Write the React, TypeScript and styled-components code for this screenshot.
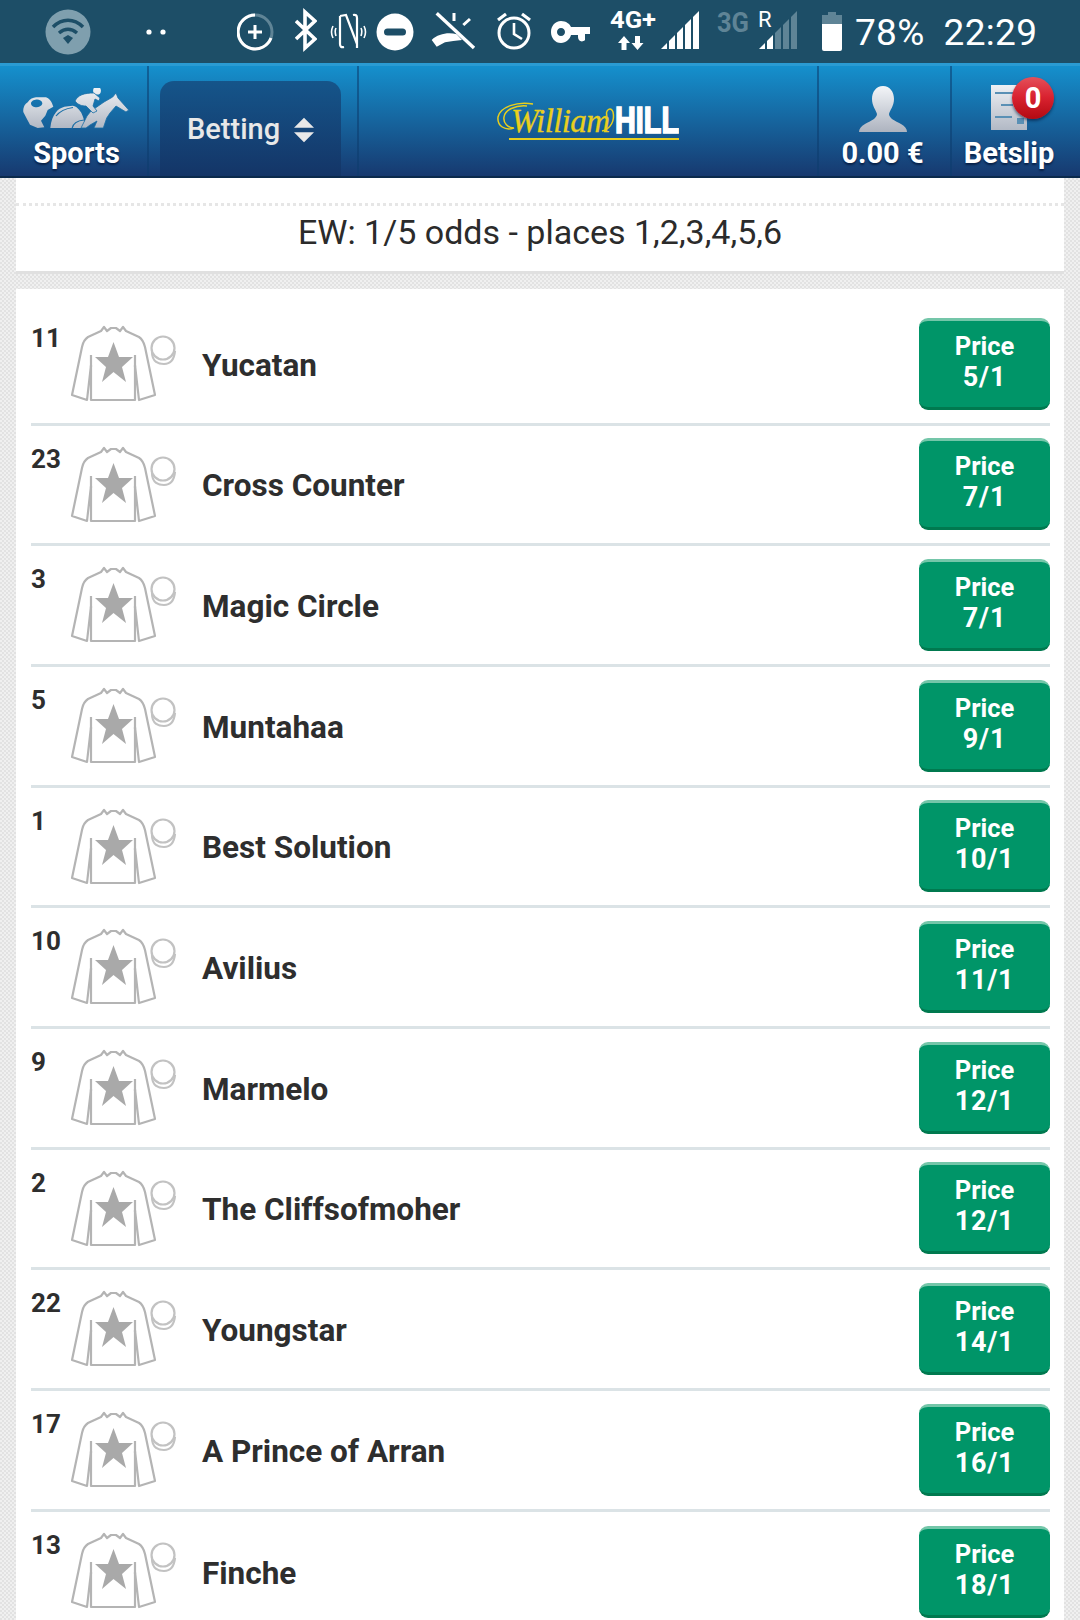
import * as React from 'react';
import styled, { createGlobalStyle } from 'styled-components';

const GlobalStyle = createGlobalStyle`
  html, body {
    margin: 0;
    padding: 0;
    background: #ececec;
  }
  * { box-sizing: border-box; }
`;

interface IRunner {
  num: string;
  name: string;
  price: string;
}

const runners: IRunner[] = [
  { num: '11', name: 'Yucatan', price: '5/1' },
  { num: '23', name: 'Cross Counter', price: '7/1' },
  { num: '3', name: 'Magic Circle', price: '7/1' },
  { num: '5', name: 'Muntahaa', price: '9/1' },
  { num: '1', name: 'Best Solution', price: '10/1' },
  { num: '10', name: 'Avilius', price: '11/1' },
  { num: '9', name: 'Marmelo', price: '12/1' },
  { num: '2', name: 'The Cliffsofmoher', price: '12/1' },
  { num: '22', name: 'Youngstar', price: '14/1' },
  { num: '17', name: 'A Prince of Arran', price: '16/1' },
  { num: '13', name: 'Finche', price: '18/1' }
];

const Page = styled.div`
  width: 1080px;
  height: 1620px;
  overflow: hidden;
  font-family: Roboto, "Liberation Sans", sans-serif;
  color: #2b2b2b;
  background-color: #eeeeee;
  background-image: conic-gradient(#e2e2e2 25%, #f0f0f0 0 50%, #e2e2e2 0 75%, #f0f0f0 0);
  background-size: 4px 4px;
`;

const StatusBar = styled.div`
  height: 63px;
  background: #1d4e67;
  display: flex;
  align-items: flex-start;
  color: #ffffff;
`;

const StatusIcon = styled.svg<{ $left: number }>`
  display: block;
  flex: none;
  margin-left: ${(p) => p.$left}px;
`;

const StatusText = styled.span<{ $left: number }>`
  margin-left: ${(p) => p.$left}px;
  font-size: 37px;
  line-height: 66px;
  letter-spacing: 0.3px;
  white-space: nowrap;
`;

const Header = styled.header`
  height: 115px;
  display: flex;
  align-items: stretch;
  border-top: 3px solid #2a9bd3;
  border-bottom: 2px solid #0b2a4c;
  background: linear-gradient(#1590cd, #17396f);
`;

const HeaderCell = styled.div<{ $width: number; $divider?: boolean; $shift?: string }>`
  position: relative;
  width: ${(p) => p.$width}px;
  flex: none;
  display: flex;
  flex-direction: column;
  align-items: center;
  justify-content: flex-end;
  padding: ${(p) => p.$shift || '0'};
  padding-bottom: 7px;
  border-right: ${(p) => (p.$divider ? '2px solid rgba(12, 60, 110, 0.55)' : '0')};
`;

const HeaderLabel = styled.span`
  color: #ffffff;
  font-size: 29px;
  font-weight: 700;
  line-height: 32px;
  text-shadow: 0 2px 2px rgba(5, 25, 60, 0.8);
  white-space: nowrap;
`;

const HeaderIcon = styled.svg<{ $gap: number }>`
  display: block;
  flex: none;
  margin-bottom: ${(p) => p.$gap}px;
`;

const TabCell = styled.div`
  width: 210px;
  flex: none;
  padding: 15px 16px 0 11px;
  border-right: 2px solid rgba(12, 60, 110, 0.55);
`;

const BettingTab = styled.div`
  height: 95px;
  border-radius: 14px 14px 0 0;
  background: linear-gradient(#15558a, #143567);
  display: flex;
  align-items: center;
  padding: 0 0 0 27px;
  gap: 14px;
  color: #e8e8e8;
  font-size: 29px;
  font-weight: 500;
`;

const Chevrons = styled.svg`
  display: block;
  margin-top: 3px;
`;

const LogoCell = styled.div`
  flex: 1;
  display: flex;
  justify-content: center;
  padding: 36px 0 0 0;
  border-right: 2px solid rgba(12, 60, 110, 0.55);
`;

const Logo = styled.div`
  position: relative;
  width: 182px;
  height: 40px;
  display: flex;
  align-items: flex-start;
`;

const LogoScript = styled.span`
  width: 118px;
  flex: none;
  padding-left: 14px;
  font-family: "Liberation Serif", serif;
  font-style: italic;
  font-size: 33px;
  line-height: 38px;
  letter-spacing: -0.6px;
  color: #e9cf1d;
  -webkit-text-stroke: 0.3px #e9cf1d;
  white-space: nowrap;
`;

const LogoBold = styled.span`
  display: block;
  font-family: "Liberation Sans", sans-serif;
  font-weight: 700;
  font-size: 36px;
  line-height: 38px;
  color: #ffffff;
  -webkit-text-stroke: 1.6px #ffffff;
  transform: scaleX(0.8);
  transform-origin: left center;
`;

const LogoRule = styled.div`
  position: absolute;
  left: 12px;
  right: 0;
  top: 36px;
  height: 2px;
  background: #e9cf1d;
`;

const LogoSwash = styled.svg`
  position: absolute;
  left: 0;
  top: 0;
`;

const Badge = styled.div`
  position: absolute;
  left: 60px;
  top: 11px;
  width: 42px;
  height: 42px;
  border-radius: 50%;
  display: flex;
  align-items: center;
  justify-content: center;
  color: #ffffff;
  font-size: 29px;
  font-weight: 700;
  background: linear-gradient(#e4505a 0%, #d92230 48%, #b30a12 100%);
  box-shadow: 0 2px 3px rgba(5, 25, 60, 0.6);
`;

const Sheet = styled.main`
  margin: 0 16px;
`;

const Notice = styled.div`
  background: #ffffff;
  border-bottom: 3px solid #e0e0e0;
  margin-bottom: 15px;
`;

const NoticeTop = styled.div`
  height: 28px;
  border-bottom: 3px dotted #e6e6e6;
`;

const NoticeText = styled.div`
  height: 65px;
  display: flex;
  align-items: center;
  justify-content: center;
  padding-bottom: 13px;
  font-size: 34px;
  color: #2b2b2b;
`;

const RunnerList = styled.section`
  background: #ffffff;
  padding: 16px 14px 0 15px;
`;

const Row = styled.div`
  height: 120.67px;
  display: flex;
  align-items: center;
  border-bottom: 3px solid #dbe3e6;

  &:last-child { border-bottom: 0; }
`;

const RunnerNum = styled.span`
  width: 38px;
  align-self: flex-start;
  margin-top: 19px;
  font-size: 26px;
  font-weight: 700;
  line-height: 28px;
  color: #2e2e2e;
`;

const Silk = styled.svg`
  display: block;
  flex: none;
  align-self: flex-start;
  margin-top: 18px;
`;

const RunnerName = styled.span`
  flex: 1;
  margin-left: 23px;
  padding-top: 3px;
  font-size: 31.5px;
  font-weight: 700;
  color: #2e2e2e;
`;

const PriceButton = styled.button`
  width: 131px;
  height: 92px;
  flex: none;
  padding: 0 0 4px;
  border: 0;
  border-top: 3px solid #74c6a9;
  border-bottom: 3px solid #00794f;
  border-radius: 9px;
  background: #009568;
  color: #ffffff;
  font-family: inherit;
  font-size: 25.5px;
  font-weight: 700;
  line-height: 31px;
`;

const PriceValue = styled.span`
  display: block;
  font-size: 27px;
  letter-spacing: 0.8px;
`;

const SilkIcon = () => (
  <Silk width="110" height="80" viewBox="8 8 110 80" fill="none" stroke="#b4b4b4" strokeWidth="2.2">
    <path d="M43 12 L46 16 L50 13 L55 13 L59 16 L62 12 L65 16 L78 22 C81 24 83 28 84 32 L94 80 L78 85 L74 50 L74 85 L30 85 L30 50 L26 85 L11 80 L21 32 C22 27 24 24 27 22 L40 16 Z" strokeLinejoin="round" />
    <path d="M30 40 V52 M74 40 V52" />
    <path d="M52.5 27 L58 42 L72 42 L61 52 L65 67 L52.5 57 L41 67 L45 52 L34 42 L47 42 Z" fill="#a9a9a9" stroke="none" />
    <circle cx="102" cy="33" r="11.5" stroke="#c2c2c2" />
    <path d="M91 37 C91 47 98 49 103 49 C108 49 113 46 114 36" stroke="#c2c2c2" />
  </Silk>
);

const SportsIcon = () => (
  <HeaderIcon $gap={7} width="110" height="42" viewBox="12 8 110 42">
    <defs>
      <linearGradient id="sp" gradientUnits="userSpaceOnUse" x1="0" y1="8" x2="0" y2="50">
        <stop offset="0" stopColor="#f0f2f5" />
        <stop offset="1" stopColor="#aeb5c1" />
      </linearGradient>
    </defs>
    <path fillRule="evenodd" fill="url(#sp)" d="M13.3 32 C13 27 15 24 17.7 22.3 C20 19 23 17.5 26 17.3 L36 17.3 C39 18 41 21 42 23.3 L43.3 26.7 L37.7 30 L35.3 35.7 L31 40.7 L34.3 47.3 L27.7 48 L20 44.7 L16 37.3 Z M21 23.5 C21 26 24 27.5 27 27.3 C30 27 32.5 25 32.3 23 C32 20.5 29 19.3 26.5 19.5 C23.5 19.8 21 21.5 21 23.5 Z" />
    <path fill="url(#sp)" d="M40.3 48 C41 41 43 36 46 32.3 C48 29 51 28 54.3 26.7 L62.7 25.7 C66 26 69 29 71 32.3 C73 36 75 42 75 48 Z" />
    <path d="M46 36 C50 31 56 28.5 63 27.5 M62 48.5 C63 43.5 68 40.5 74 40" fill="none" stroke="#1a6ea6" strokeWidth="1.2" />
    <path fill="url(#sp)" stroke="#1a6ea6" strokeWidth="0.8" d="M102.7 17 L106 13 L108 18 L118.7 30 L116 32 L106 26 L100 33 L96.7 38 L93.3 48 L84 48 L87 41 L80 45 L76 48 L71 48 L77 36 L81 31 L94 22 Z" />
    <circle cx="87" cy="10.7" r="3.9" fill="url(#sp)" />
    <path fill="url(#sp)" stroke="#1a6ea6" strokeWidth="0.8" d="M65 21 C68 15 74 13 84 13 L90 18 L89 21 L85 19 L83 26 L87 31 L83 33 L76 26 C72 26 68 25 65 21 Z" />
  </HeaderIcon>
);

const UserIcon = () => (
  <HeaderIcon $gap={5} width="48" height="46" viewBox="0 0 48 46">
    <defs>
      <linearGradient id="us" x1="0" y1="0" x2="0" y2="1">
        <stop offset="0" stopColor="#f3f5f8" />
        <stop offset="1" stopColor="#adb3bf" />
      </linearGradient>
    </defs>
    <path fill="url(#us)" d="M24 0 C31 0 35 6 35 13 C35 20 31 24 30 28 C30 32 36 35 42 38 C46 40 48 43 48 46 L0 46 C0 43 2 40 6 38 C12 35 18 32 18 28 C17 24 13 20 13 13 C13 6 17 0 24 0 Z" />
  </HeaderIcon>
);

const SlipIcon = () => (
  <HeaderIcon $gap={7} width="36" height="45" viewBox="0 0 36 45">
    <defs>
      <linearGradient id="sl" x1="0" y1="0" x2="0" y2="1">
        <stop offset="0" stopColor="#eef0f4" />
        <stop offset="1" stopColor="#b2b9c5" />
      </linearGradient>
    </defs>
    <rect width="36" height="45" fill="url(#sl)" />
    <path d="M4 8 H22 M10 20 H22 M4 32 H21" stroke="#5a90b5" strokeWidth="2" />
    <rect x="26" y="33" width="7" height="6" fill="#5a90b5" />
  </HeaderIcon>
);

const Signal = ({ left, dim }: { left: number; dim?: boolean }) => (
  <StatusIcon $left={left} width="39" height="63" viewBox="0 0 39 63">
    <g fill={dim ? '#5f8496' : '#ffffff'}>
      <path d="M0 49 L6 43 V49 Z" fill="#ffffff" />
      <path d="M8 49 V41 L14 35 V49 Z" fill={dim ? '#ffffff' : undefined} />
      <path d="M16 49 V33 L22 27 V49 Z" />
      <path d="M24 49 V25 L30 19 V49 Z" />
      <path d="M32 49 V17 L38 11 V49 Z" />
    </g>
  </StatusIcon>
);

const StatusIcons = () => (
  <>
    <StatusIcon $left={45} width="46" height="63" viewBox="0 0 46 63">
      <circle cx="23" cy="32" r="22.5" fill="#7f9fae" />
      <path d="M8 27 C17 18 29 18 38 27 M14 33 C20 28 26 28 32 33" fill="none" stroke="#1d4e67" strokeWidth="3.5" />
      <path d="M18 38 L23 35 L28 38 L23 44 Z" fill="#1d4e67" />
    </StatusIcon>
    <StatusIcon $left={54} width="22" height="63" viewBox="0 0 22 63">
      <circle cx="4" cy="32" r="2.6" fill="#fff" />
      <circle cx="18" cy="32" r="2.6" fill="#fff" />
    </StatusIcon>
    <StatusIcon $left={70} width="38" height="63" viewBox="0 0 38 63">
      <circle cx="18" cy="32" r="17" fill="none" stroke="#5f8496" strokeWidth="3" />
      <path d="M18 15 A17 17 0 1 0 34 38" fill="none" stroke="#fff" strokeWidth="3" />
      <path d="M18 25 V39 M11 32 H25" stroke="#fff" strokeWidth="3" />
    </StatusIcon>
    <StatusIcon $left={20} width="22" height="63" viewBox="0 0 22 63">
      <path d="M1 21 L20 39 L10 48 V12 L20 21 L1 39" fill="none" stroke="#fff" strokeWidth="3.6" />
    </StatusIcon>
    <StatusIcon $left={13} width="37" height="63" viewBox="0 0 37 63">
      <path d="M10 16 V44 Q10 48 14 47 M10 16 L16 15 L27 44 M27 48 V18 Q27 14 23 15" fill="none" stroke="#fff" strokeWidth="2.2" />
      <path d="M3 26 C1 30 1 34 3 38 M6 28 C5 30 5 33 6 36 M31 28 C32 30 32 33 31 36 M34 26 C36 30 36 34 34 38" fill="none" stroke="#fff" strokeWidth="1.6" />
    </StatusIcon>
    <StatusIcon $left={9} width="38" height="63" viewBox="0 0 38 63">
      <circle cx="19" cy="32" r="18.5" fill="#fff" />
      <rect x="8" y="28.5" width="22" height="7" rx="3.5" fill="#1d4e67" />
    </StatusIcon>
    <StatusIcon $left={16} width="48" height="63" viewBox="0 0 48 63">
      <path d="M6.7 13.3 L44 48" stroke="#fff" strokeWidth="3.4" />
      <path d="M1.7 40 C8 34 18 32 26.7 34.3 L32 40 L23.3 41 L15 42.3 L6.7 46.7 Z" fill="#fff" />
      <path d="M24 13 V21 M40 19 L33.3 25" stroke="#fff" strokeWidth="3" />
    </StatusIcon>
    <StatusIcon $left={18} width="38" height="63" viewBox="0 0 38 63">
      <circle cx="18" cy="33" r="15" fill="none" stroke="#fff" strokeWidth="3" />
      <path d="M18 23 V34 L26 39" fill="none" stroke="#fff" strokeWidth="2.6" />
      <path d="M2 20 L10 14 M34 20 L26 14" stroke="#fff" strokeWidth="3.2" />
    </StatusIcon>
    <StatusIcon $left={17} width="40" height="63" viewBox="0 0 40 63">
      <path fillRule="evenodd" d="M10 21 C15 21 19 24 20 27 H39 V34 H34 V40 C31 43 27 41 27 37 V35 H20 C19 39 15 43 10 43 C4 43 0 38 0 32 C0 26 4 21 10 21 Z M10 28 C7.5 28 6 30 6 32 C6 34 7.5 36 10 36 C12.5 36 14 34 14 32 C14 30 12.5 28 10 28 Z" fill="#fff" />
    </StatusIcon>
    <StatusIcon $left={19} width="50" height="63" viewBox="0 0 50 63">
      <text x="0" y="28" fill="#fff" fontFamily="Roboto, sans-serif" fontWeight="700" fontSize="24" textLength="46" lengthAdjust="spacingAndGlyphs">4G+</text>
      <path d="M14 36 L20 43 H16.5 V50 H11.5 V43 H8 Z M25 36 H30 V43 H33.5 L27.5 50 L21.5 43 H25 Z" fill="#fff" />
    </StatusIcon>
    <Signal left={1} />
    <StatusIcon $left={16} width="56" height="63" viewBox="0 0 56 63">
      <text x="1" y="32" fill="#5f8496" fontFamily="Roboto, sans-serif" fontWeight="700" fontSize="28" textLength="32" lengthAdjust="spacingAndGlyphs">3G</text>
      <text x="42" y="27" fill="#fff" fontFamily="Roboto, sans-serif" fontSize="22">R</text>
    </StatusIcon>
    <Signal left={-13} dim />
    <StatusIcon $left={23} width="22" height="63" viewBox="0 0 22 63">
      <path d="M7 12 H15 V15 H21 V24 H1 V15 H7 Z" fill="#5f8496" />
      <path d="M1 24 H21 V49 Q21 51 19 51 H3 Q1 51 1 49 Z" fill="#fff" />
    </StatusIcon>
    <StatusText $left={12}>78%</StatusText>
    <StatusText $left={19}>22:29</StatusText>
  </>
);

const App: React.FC = () => {
  return (
    <Page>
      <GlobalStyle />
      <StatusBar>
        <StatusIcons />
      </StatusBar>
      <Header>
        <HeaderCell $width={149} $divider $shift="0 0 0 6px">
          <SportsIcon />
          <HeaderLabel>Sports</HeaderLabel>
        </HeaderCell>
        <TabCell>
          <BettingTab>
            Betting
            <Chevrons width="20" height="27" viewBox="0 0 22 28">
              <path d="M11 0 L22 11 H0 Z M0 16 H22 L11 27 Z" fill="#e8e8e8" />
            </Chevrons>
          </BettingTab>
        </TabCell>
        <LogoCell>
          <Logo>
            <LogoSwash width="120" height="36" viewBox="0 0 120 36" fill="none" stroke="#e9cf1d" strokeWidth="1.5">
              <path d="M36 2 C20 -1 3 5 1 15 C0 24 8 29 17 26 C11 26 6 21 7 15 C8 8 18 3 30 4" />
              <path d="M105 29 C114 27 118 18 116 10 C114 4 108 8 110 14" />
            </LogoSwash>
            <LogoScript>William</LogoScript>
            <LogoBold>HILL</LogoBold>
            <LogoRule />
          </Logo>
        </LogoCell>
        <HeaderCell $width={133} $divider $shift="0 4px 0 0">
          <UserIcon />
          <HeaderLabel>0.00 €</HeaderLabel>
        </HeaderCell>
        <HeaderCell $width={128} $shift="0 14px 0 0">
          <SlipIcon />
          <Badge>0</Badge>
          <HeaderLabel>Betslip</HeaderLabel>
        </HeaderCell>
      </Header>
      <Sheet>
        <Notice>
          <NoticeTop />
          <NoticeText>EW: 1/5 odds - places 1,2,3,4,5,6</NoticeText>
        </Notice>
        <RunnerList>
          {runners.map((runner) => (
            <Row key={runner.num}>
              <RunnerNum>{runner.num}</RunnerNum>
              <SilkIcon />
              <RunnerName>{runner.name}</RunnerName>
              <PriceButton>
                Price
                <PriceValue>{runner.price}</PriceValue>
              </PriceButton>
            </Row>
          ))}
        </RunnerList>
      </Sheet>
    </Page>
  );
};

export default App;
